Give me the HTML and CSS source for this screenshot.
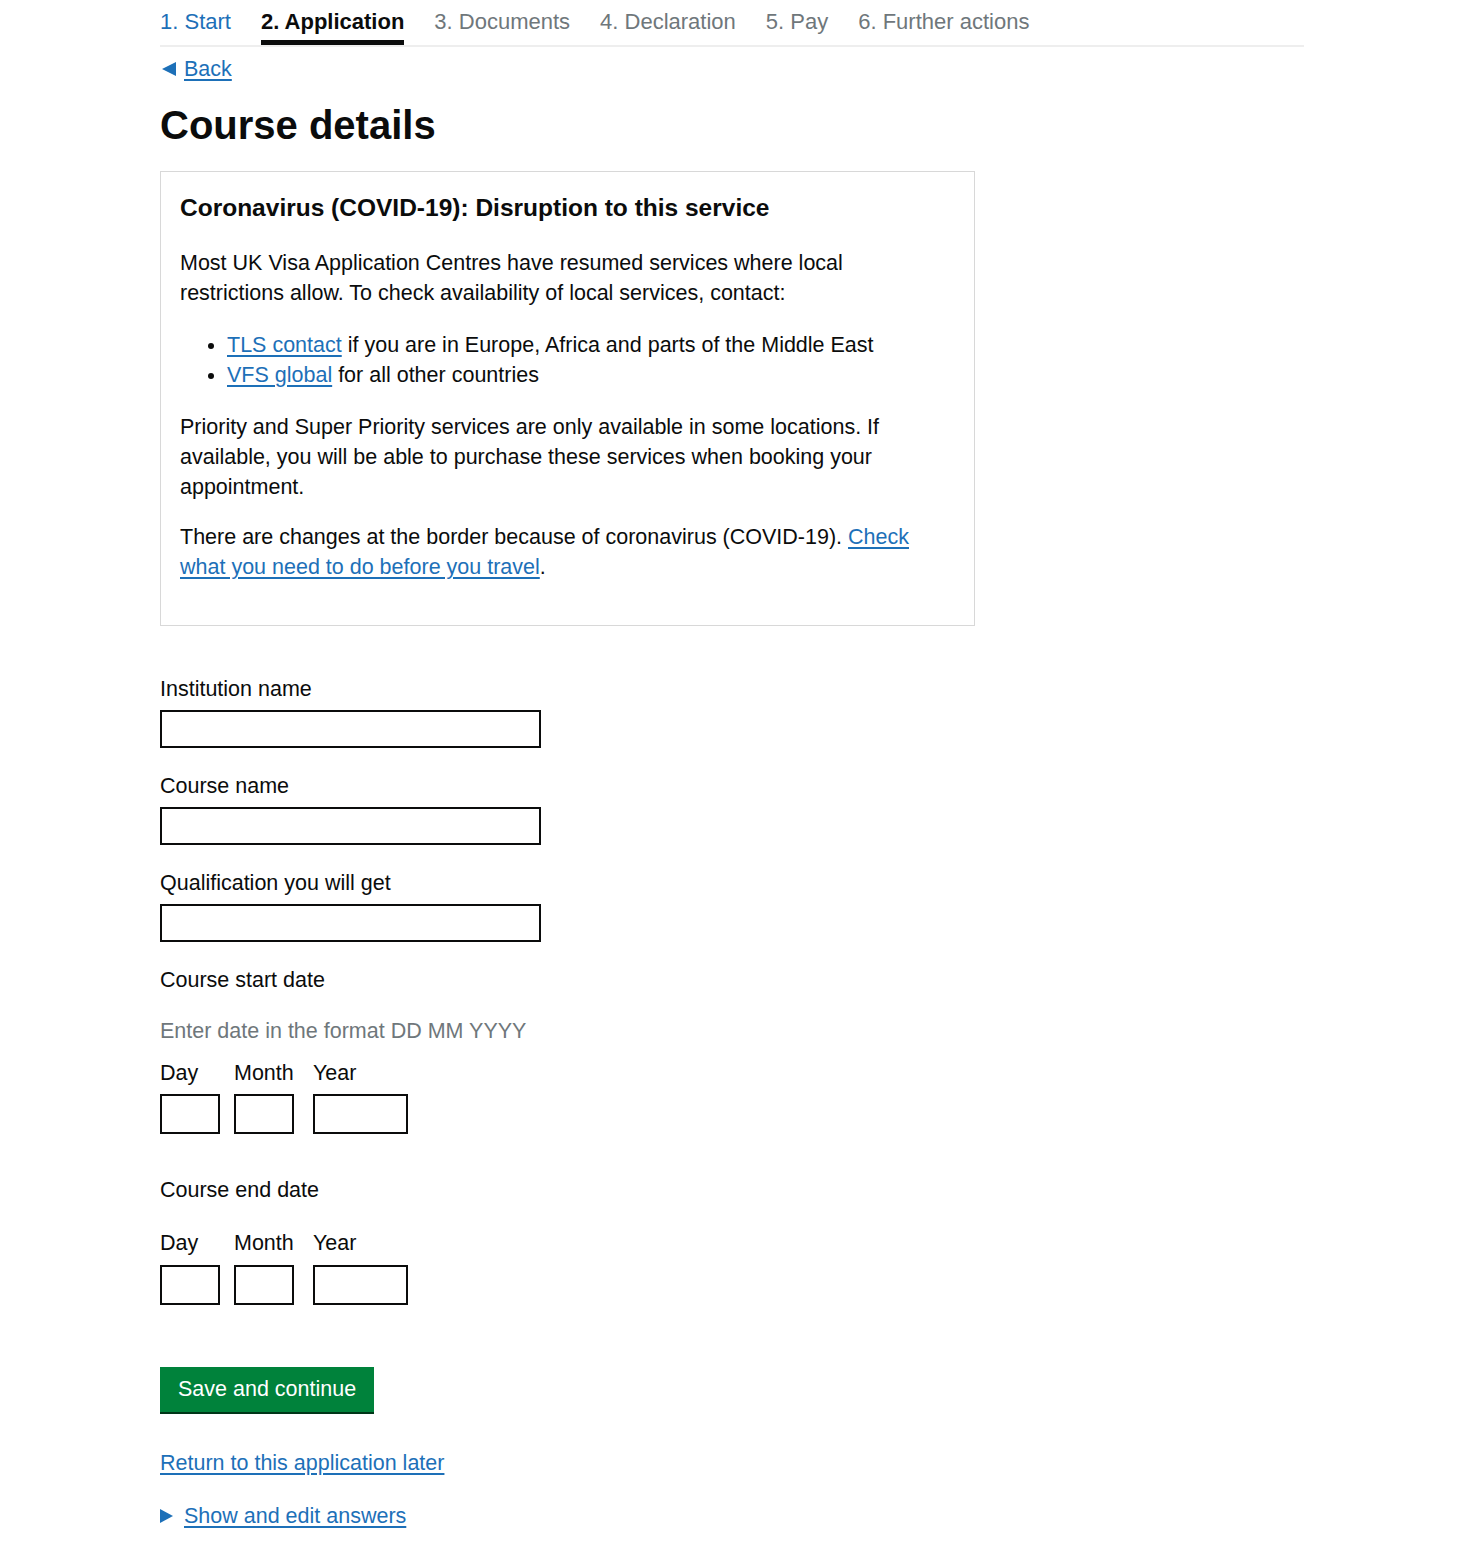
FILE: index.html
```html
<!DOCTYPE html>
<html lang="en">
<head>
    <meta charset="UTF-8">
    <title>Course details</title>
    <link rel="stylesheet" href="styles.css">
</head>
<body>
    <div class="page">
        <!-- Progress steps -->
        <nav class="steps">
            <a class="step done" href="#">1. Start</a>
            <span class="step current">2. Application</span>
            <span class="step">3. Documents</span>
            <span class="step">4. Declaration</span>
            <span class="step">5. Pay</span>
            <span class="step">6. Further actions</span>
        </nav>

        <a class="back-link" href="#">Back</a>

        <h1 class="heading">Course details</h1>

        <!-- Covid notice -->
        <div class="notice">
            <h2 class="notice-title">Coronavirus (COVID-19): Disruption to this service</h2>
            <p>Most UK Visa Application Centres have resumed services where local restrictions allow. To check availability of local services, contact:</p>
            <ul>
                <li><a href="#">TLS contact</a> if you are in Europe, Africa and parts of the Middle East</li>
                <li><a href="#">VFS global</a> for all other countries</li>
            </ul>
            <p class="priority">Priority and Super Priority services are only available in some locations. If available, you will be able to purchase these services when booking your appointment.</p>
            <p>There are changes at the border because of coronavirus (COVID-19). <a href="#">Check what you need to do before you travel</a>.</p>
        </div>

        <form class="form">
            <div class="field">
                <label class="label" for="institution">Institution name</label>
                <input class="text-input" id="institution" type="text">
            </div>
            <div class="field">
                <label class="label" for="course">Course name</label>
                <input class="text-input" id="course" type="text">
            </div>
            <div class="field">
                <label class="label" for="qualification">Qualification you will get</label>
                <input class="text-input" id="qualification" type="text">
            </div>

            <fieldset class="date-group">
                <legend class="label">Course start date</legend>
                <div class="hint">Enter date in the format DD MM YYYY</div>
                <div class="date-row">
                    <div class="date-item">
                        <label class="label">Day</label>
                        <input class="date-input small" type="text">
                    </div>
                    <div class="date-item">
                        <label class="label">Month</label>
                        <input class="date-input small" type="text">
                    </div>
                    <div class="date-item year">
                        <label class="label">Year</label>
                        <input class="date-input wide" type="text">
                    </div>
                </div>
            </fieldset>

            <fieldset class="date-group end">
                <legend class="label">Course end date</legend>
                <div class="date-row">
                    <div class="date-item">
                        <label class="label">Day</label>
                        <input class="date-input small" type="text">
                    </div>
                    <div class="date-item">
                        <label class="label">Month</label>
                        <input class="date-input small" type="text">
                    </div>
                    <div class="date-item year">
                        <label class="label">Year</label>
                        <input class="date-input wide" type="text">
                    </div>
                </div>
            </fieldset>

            <button class="save-button" type="button">Save and continue</button>
        </form>

        <a class="later-link" href="#">Return to this application later</a>

        <div class="details">
            <span class="details-arrow"></span>
            <a href="#">Show and edit answers</a>
        </div>
    </div>
</body>
</html>
```

FILE: styles.css
```css
/* Base */
body {
    margin: 0;
    font-family: "Liberation Sans", Arial, sans-serif;
    color: #0b0c0c;
    background-color: #ffffff;
}

a {
    color: #1d70b8;
    text-decoration: underline;
    text-underline-offset: 3px;
}

.page {
    width: 1144px;
    margin-left: 160px;
}

/* Steps */
.steps {
    display: flex;
    gap: 30px;
    border-bottom: 2px solid #eeeeee;
    height: 45px;
    font-size: 22px;
}

.step {
    color: #6f777b;
    padding-top: 9px;
    text-decoration: none;
    box-sizing: border-box;
}

.step.done {
    color: #1d70b8;
}

.step.current {
    color: #0b0c0c;
    font-weight: bold;
    border-bottom: 5px solid #0b0c0c;
}

/* Back link */
.back-link {
    display: inline-flex;
    align-items: center;
    gap: 8px;
    margin-top: 10px;
    margin-left: 2px;
    font-size: 21.5px;
    line-height: 24px;
}

.back-link::before {
    content: "";
    border-style: solid;
    border-width: 7px 14px 7px 0;
    border-color: transparent #1d70b8 transparent transparent;
}

.heading {
    font-size: 40px;
    line-height: 48px;
    margin: 20px 0 22px;
}

/* Notice */
.notice {
    width: 740px;
    border: 1px solid #d8d8d8;
    padding: 18px 54px 43px 19px;
}

.notice-title {
    font-size: 24.5px;
    line-height: 32px;
    margin: 2px 0 24px;
}

.notice p,
.notice li {
    font-size: 21.5px;
    line-height: 30px;
}

.notice p {
    margin: 0 0 22px;
}

.notice p.priority {
    margin-bottom: 20px;
}

.notice p:last-child {
    margin-bottom: 0;
}

.notice ul {
    margin: 0 0 22px;
    padding-left: 47px;
}

/* Form */
.form {
    margin-top: 48px;
}

.field {
    margin-bottom: 23px;
}

.label {
    display: block;
    font-size: 21.5px;
    line-height: 30px;
    margin-bottom: 6px;
}

.text-input {
    display: block;
    width: 381px;
    height: 38px;
    box-sizing: border-box;
    border: 2px solid #0b0c0c;
    margin: 0;
}

.date-group {
    border: 0;
    padding: 0;
    margin: 0 0 41px;
}

.date-group legend {
    padding: 0;
    margin-bottom: 21px;
}

.date-group.end legend {
    margin-bottom: 23px;
}

.hint {
    color: #6f777b;
    font-size: 21.5px;
    line-height: 30px;
    margin-bottom: 12px;
}

.date-row {
    display: flex;
    gap: 14px;
}

.date-item .label {
    margin-bottom: 6px;
}

.date-group.end .date-item .label {
    margin-bottom: 7px;
}

.date-input {
    display: block;
    height: 40px;
    box-sizing: border-box;
    border: 2px solid #0b0c0c;
    margin: 0;
}

.date-input.small {
    width: 60px;
}

.date-item.year {
    margin-left: 5px;
}

.date-input.wide {
    width: 95px;
}

/* Button */
.save-button {
    display: block;
    margin-top: 62px;
    background-color: #00823b;
    color: #ffffff;
    border: none;
    box-shadow: 0 2px 0 #003618;
    font-family: inherit;
    font-size: 21.5px;
    padding: 0 18px;
    height: 45px;
    cursor: pointer;
}

.later-link {
    display: inline-block;
    margin-top: 36px;
    font-size: 21.5px;
    line-height: 30px;
}

.details {
    display: flex;
    align-items: center;
    gap: 11px;
    margin-top: 23px;
    font-size: 21.5px;
    line-height: 30px;
}

.details-arrow {
    border-style: solid;
    border-width: 7px 0 7px 13px;
    border-color: transparent transparent transparent #1d70b8;
}
```
